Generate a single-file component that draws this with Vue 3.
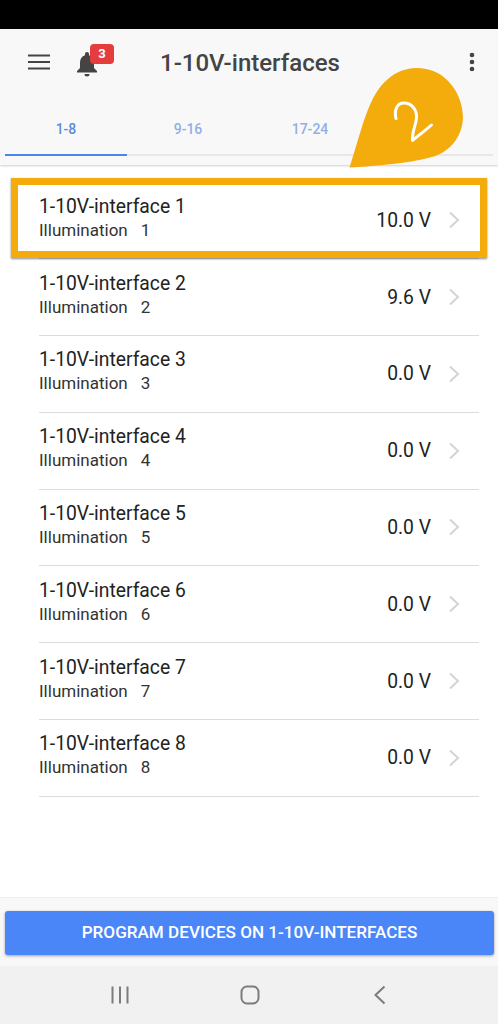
<script setup>
const tabs = ['1-8', '9-16', '17-24', '']
const rows = [
  { n: 1, v: '10.0 V' },
  { n: 2, v: '9.6 V' },
  { n: 3, v: '0.0 V' },
  { n: 4, v: '0.0 V' },
  { n: 5, v: '0.0 V' },
  { n: 6, v: '0.0 V' },
  { n: 7, v: '0.0 V' },
  { n: 8, v: '0.0 V' }
]
</script>

<template>
  <div class="screen">
    <div class="status"></div>
    <header class="head">
      <div class="bar">
        <svg class="menu" width="24" height="18" viewBox="0 0 24 18">
          <path d="M1 2.500H23M1 9H23M1 15.500H23" stroke="#444" stroke-width="2.200" fill="none" />
        </svg>
        <div class="bell">
          <svg width="24" height="26" viewBox="0 0 24 26">
            <path d="M12 1c-1.200 0-2 .8-2 2v1.200C6.800 5.100 5 8 5 11.500v5.500l-3 3v1.500h20V20l-3-3v-5.500c0-3.500-1.800-6.400-5-7.300V3c0-1.200-.8-2-2-2zM9.500 23a2.500 2.500 0 0 0 5 0z" fill="#444" />
          </svg>
          <span class="badge">3</span>
        </div>
        <h1 class="title">1-10V-interfaces</h1>
        <svg class="more" width="6" height="20" viewBox="0 0 6 20">
          <circle cx="3" cy="3" r="2.300" fill="#444" />
          <circle cx="3" cy="10" r="2.300" fill="#444" />
          <circle cx="3" cy="17" r="2.300" fill="#444" />
        </svg>
      </div>
      <nav class="tabs">
        <div v-for="(t, i) in tabs" :key="i" class="tab" :class="{ on: i === 0 }">{{ t }}</div>
      </nav>
    </header>

    <main class="list">
      <div v-for="r in rows" :key="r.n" class="row">
        <div class="info">
          <div class="name">1-10V-interface {{ r.n }}</div>
          <div class="sub"><span>Illumination</span><span>{{ r.n }}</span></div>
        </div>
        <div class="val">{{ r.v }}</div>
        <svg class="chev" width="12" height="18" viewBox="0 0 12 18">
          <path d="M2 1.500L10 9L2 16.500" stroke="#d4d4d4" stroke-width="2" fill="none" />
        </svg>
      </div>
    </main>

    <footer class="foot">
      <button class="cta">PROGRAM DEVICES ON 1-10V-INTERFACES</button>
    </footer>
    <div class="nav">
      <svg width="20" height="20" viewBox="0 0 20 20">
        <path d="M2.500 1.500V18.500M10 1.500V18.500M17.500 1.500V18.500" stroke="#7c7c7c" stroke-width="2" fill="none" />
      </svg>
      <svg width="20" height="20" viewBox="0 0 20 20">
        <rect x="1.500" y="1.500" width="17" height="17" rx="5.500" stroke="#7c7c7c" stroke-width="2" fill="none" />
      </svg>
      <svg width="20" height="20" viewBox="0 0 20 20">
        <path d="M14.500 1.500L5.500 10L14.500 18.500" stroke="#7c7c7c" stroke-width="2" fill="none" />
      </svg>
    </div>

    <div class="mark"></div>
    <svg class="pin" width="120" height="106" viewBox="345 64 120 106">
      <path d="M349.500 167.500C362 130 368 95 388 79C398 70 412 66 426 69C448 73 463 95 463 118C462 137 450 152 432 157C405 164 375 166 349.500 167.500Z" fill="#f3ac0c" />
      <path d="M396 118.500C394 110 397 103 404 103C412 103 417 110 416.500 118C416 125 412 131 412.500 140.500C419 135 426 130 431.500 125" stroke="#fff" stroke-width="3" stroke-linecap="round" stroke-linejoin="round" fill="none" />
    </svg>
  </div>
</template>

<style>
html, body { margin: 0; background: #fff; }
</style>

<style scoped>
.screen {
  position: relative;
  width: 498px;
  height: 1024px;
  display: flex;
  flex-direction: column;
  overflow: hidden;
  font-family: Roboto, "Liberation Sans", sans-serif;
  background: #fff;
}
.status { height: 29px; background: #000; flex: none; }
.head {
  flex: none;
  height: 136px;
  background: #f8f8f8;
  box-shadow: 0 1px 2px rgba(0, 0, 0, .2);
  display: flex;
  flex-direction: column;
}
.bar {
  height: 66px;
  display: flex;
  align-items: center;
  padding: 0 23px 0 27px;
}
.menu { flex: none; }
.bell { position: relative; margin-left: 24px; width: 24px; height: 26px; margin-top: 4px; }
.bell svg { display: block; }
.badge {
  position: absolute;
  left: 15px;
  top: -7px;
  width: 24px;
  height: 20px;
  border-radius: 4px;
  background: #e53d3d;
  color: #fff;
  font-size: 13px;
  font-weight: 700;
  line-height: 20px;
  text-align: center;
}
.title {
  margin: 2px 0 0 61px;
  font-size: 24px;
  font-weight: 500;
  color: #444;
  flex: 1;
}
.tabs {
  margin: 0 5px;
  height: 59px;
  display: flex;
  border-bottom: 2px solid #e8e8e8;
}
.tab {
  width: 122.500px;
  height: 61px;
  box-sizing: border-box;
  padding-top: 26px;
  text-align: center;
  font-size: 14px;
  font-weight: 500;
  color: #8fb0e6;
}
.tab.on { color: #5c8de0; border-bottom: 2px solid #4a86e8; }
.list { flex: 1; padding: 17.400px 19px 0 39px; }
.row {
  height: 76.800px;
  box-sizing: border-box;
  border-bottom: 1px solid #dcdcdc;
  display: flex;
  align-items: center;
  color: #222;
}
.info { flex: 1; padding-bottom: 4px; }
.name { font-size: 19.300px; line-height: 24px; }
.sub { font-size: 17px; line-height: 24px; margin-top: -1px; display: flex; gap: 13px; color: #333; }
.val { font-size: 19.300px; margin-right: 1px; }
.chev { margin: 0 19px 0 16px; flex: none; }
.foot {
  flex: none;
  height: 69px;
  box-sizing: border-box;
  padding: 13px 4px 0 5px;
  background: #f8f8f8;
  border-top: 1px solid #eee;
}
.cta {
  display: block;
  width: 100%;
  height: 44px;
  padding: 0 0 2px;
  border: 0;
  border-radius: 3px;
  background: #4a86f8;
  box-shadow: 0 1px 3px rgba(0, 0, 0, .35);
  color: #fff;
  font: 500 17.100px Roboto, "Liberation Sans", sans-serif;
}
.nav {
  flex: none;
  height: 58px;
  background: #f1f1f1;
  display: flex;
  align-items: center;
  justify-content: space-between;
  padding: 0 108px 0 110px;
}
.mark {
  position: absolute;
  left: 11px;
  top: 178px;
  width: 476px;
  height: 80px;
  box-sizing: border-box;
  border: 7px solid #f3ac0c;
  box-shadow: 0 1px 2px rgba(0, 0, 0, .45);
}
.pin { position: absolute; left: 345px; top: 64px; }
</style>
